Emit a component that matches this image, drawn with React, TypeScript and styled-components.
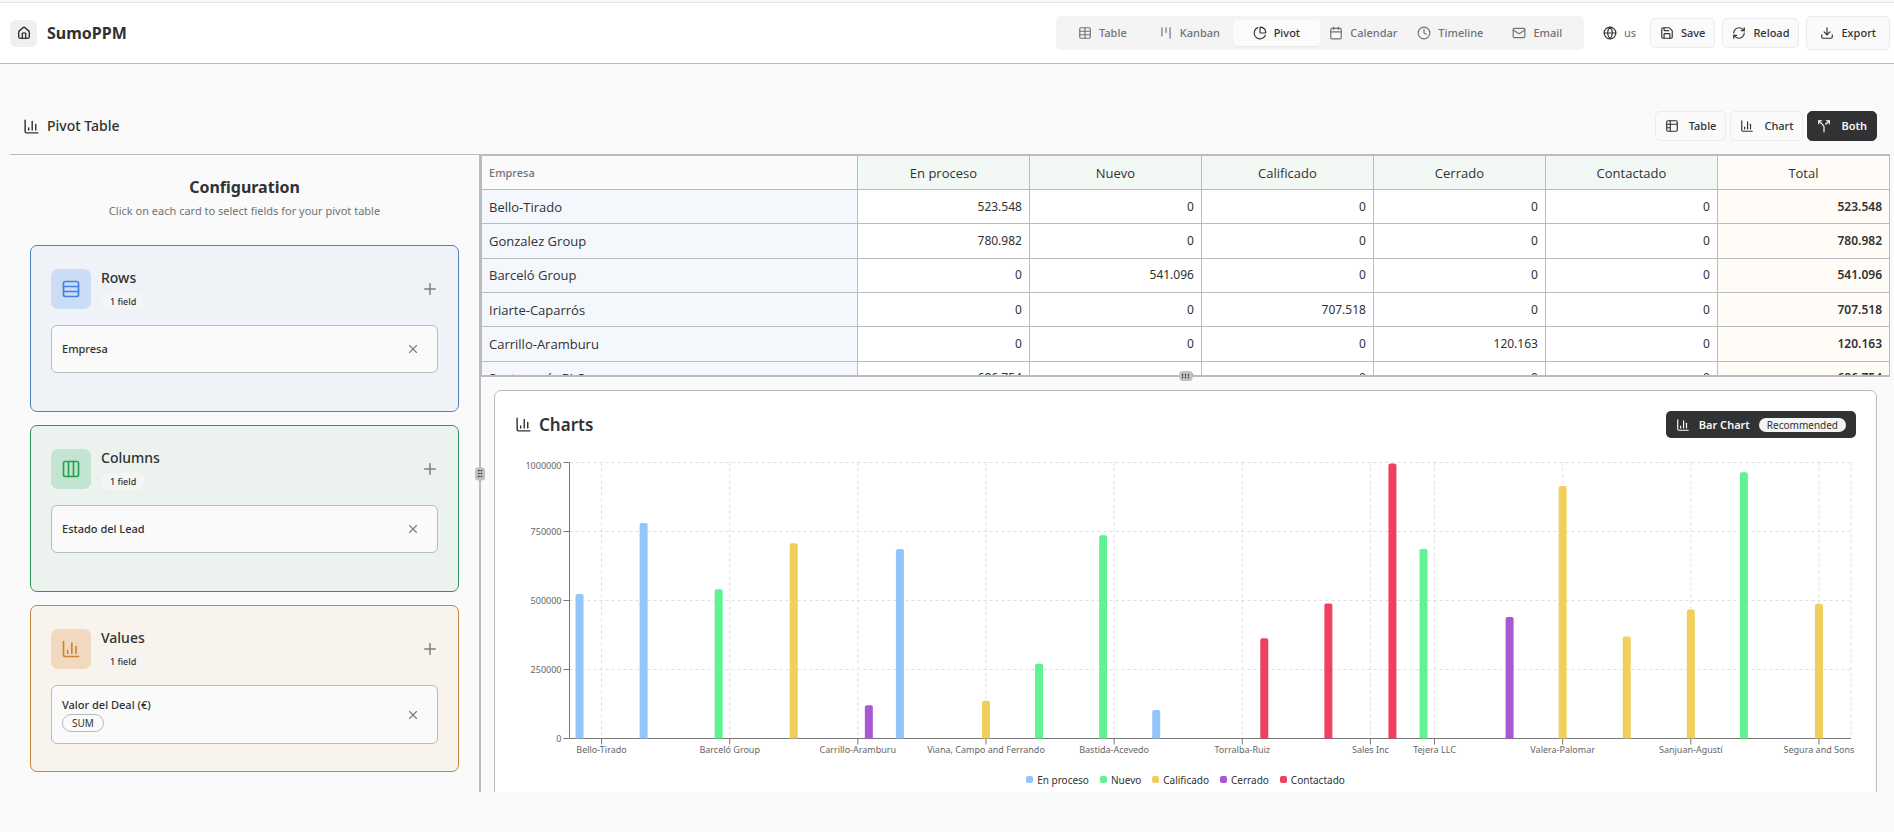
import React, { useLayoutEffect, useRef, useState } from "react";
import styled, { createGlobalStyle, css } from "styled-components";
import {
  Calendar,
  ChartColumn,
  ChartPie,
  Clock,
  Columns3,
  Download,
  Globe,
  GripVertical,
  House,
  Kanban,
  Mail,
  Plus,
  RefreshCw,
  Rows3,
  Save,
  Split,
  Table,
  X,
} from "lucide-react";

const line = "#b9bbbc";
const ink = "#303233";
const muted = "#707374";

const GlobalStyle = createGlobalStyle`
  *, *::before, *::after { box-sizing: border-box; }
  body {
    margin: 0;
    background: #fafafa;
    color: ${ink};
    font: 400 11px/16px "Noto Sans", "Open Sans", sans-serif;
  }
  button { font: inherit; color: inherit; margin: 0; cursor: pointer; }
  h1, h2, h3, p { margin: 0; }
  svg { flex-shrink: 0; }
`;

const Page = styled.div`
  display: flex;
  flex-direction: column;
  height: 100vh;
  min-height: 720px;
`;

/* ---------- header ---------- */

const Header = styled.header`
  display: flex;
  align-items: center;
  justify-content: space-between;
  margin-top: 2px;
  padding: 13px 4px 13px 10px;
  background: #fff;
  border-top: 1px solid #e4e4e4;
  border-bottom: 1px solid ${line};
`;

const Brand = styled.div`
  display: flex;
  align-items: center;
  gap: 10px;
`;

const HomeLink = styled.a`
  display: flex;
  align-items: center;
  justify-content: center;
  width: 27px;
  height: 27px;
  border-radius: 6px;
  background: #efefef;
  color: #111;
`;

const BrandName = styled.h1`
  font-size: 16px;
  line-height: 24px;
  font-weight: 700;
`;

const HeaderRight = styled.div`
  display: flex;
  align-items: center;
  gap: 7px;
`;

const TabBar = styled.nav`
  display: grid;
  grid-template-columns: repeat(6, 87px);
  padding: 4px 3px;
  border-radius: 5px;
  background: #f4f4f4;
`;

const Tab = styled.button<{ $active?: boolean }>`
  display: flex;
  align-items: center;
  justify-content: center;
  gap: 7px;
  height: 26px;
  padding: 0;
  border: 0;
  border-radius: 4px;
  background: transparent;
  color: ${muted};
  font-weight: 500;
  ${(p) =>
    p.$active &&
    css`
      background: #fbfbfb;
      color: ${ink};
      box-shadow: 0 1px 2px rgba(0, 0, 0, 0.06);
    `}
`;

const LanguageButton = styled.button`
  display: flex;
  align-items: center;
  gap: 7px;
  padding: 0 7px 0 12px;
  border: 0;
  background: transparent;
  span { color: #66696a; }
`;

const ActionButton = styled.button<{ $dark?: boolean; $large?: boolean; $wide?: boolean }>`
  display: flex;
  align-items: center;
  gap: ${(p) => (p.$wide ? 10 : 7)}px;
  height: ${(p) => (p.$large ? 34 : 30)}px;
  padding: 0 ${(p) => (p.$large ? 13 : 9)}px;
  border: 1px solid ${(p) => (p.$dark ? ink : "#ebebeb")};
  border-radius: 5px;
  background: ${(p) => (p.$dark ? ink : "#fafafa")};
  color: ${(p) => (p.$dark ? "#fafafa" : ink)};
  font-weight: ${(p) => (p.$dark ? 600 : 500)};
`;

/* ---------- pivot area ---------- */

const Main = styled.main`
  flex: 1;
  min-height: 0;
  display: flex;
  flex-direction: column;
  padding: 47px 4px 40px 10px;
`;

const Toolbar = styled.div`
  display: flex;
  align-items: center;
  justify-content: space-between;
  padding: 0 13px 13px;
  border-bottom: 1px solid ${line};
`;

const ToolbarTitle = styled.h2`
  display: flex;
  align-items: center;
  gap: 7px;
  font-size: 14px;
  line-height: 20px;
  font-weight: 500;
`;

const ViewButtons = styled.div`
  display: flex;
  gap: 4px;
`;

const Workspace = styled.div`
  flex: 1;
  min-height: 0;
  display: grid;
  grid-template-columns: calc(25% - 1px) 2px minmax(0, 1fr);
`;

const Results = styled.div`
  min-height: 0;
  display: grid;
  grid-template-rows: minmax(0, 9fr) 2px minmax(0, 17fr);
`;

const Divider = styled.div`
  position: relative;
  background: ${line};
`;

const Handle = styled.span<{ $flat?: boolean }>`
  position: absolute;
  z-index: 1;
  top: 50%;
  left: 50%;
  display: flex;
  align-items: center;
  justify-content: center;
  width: 10px;
  height: 13px;
  border-radius: 3px;
  background: #c0c0c0;
  transform: translate(-50%, -50%) ${(p) => (p.$flat ? "rotate(90deg)" : "")};
`;

/* ---------- configuration ---------- */

const ConfigPanel = styled.aside`
  min-height: 0;
  overflow: hidden;
  display: flex;
  flex-direction: column;
  padding: 20px;
`;

const ConfigHead = styled.div`
  margin-bottom: 25px;
  text-align: center;
`;

const ConfigTitle = styled.h2`
  font-size: 16px;
  line-height: 24px;
  font-weight: 700;
`;

const ConfigHint = styled.p`
  margin-top: 3px;
  line-height: 18px;
  color: ${muted};
`;

const Cards = styled.div`
  flex: 1;
  display: flex;
  flex-direction: column;
  gap: 13px;
`;

type Tone = "blue" | "green" | "orange";
const tones: Record<Tone, { edge: string; fill: string; box: string; icon: string; badge: string }> = {
  blue: { edge: "#4b80bd", fill: "#eff3f8", box: "#cbdcf5", icon: "#4280e4", badge: "#f4f5f7" },
  green: { edge: "#2f9558", fill: "#ecf3ee", box: "#c3e4d0", icon: "#26a052", badge: "#f4f5f4" },
  orange: { edge: "#c2853c", fill: "#f8f3ec", box: "#f0d9be", icon: "#d08230", badge: "#f4f4f5" },
};

const Card = styled.section<{ $tone: Tone }>`
  flex: 1;
  padding: 22px 20px 20px;
  border: 1px solid ${(p) => tones[p.$tone].edge};
  border-radius: 7px;
  background: ${(p) => tones[p.$tone].fill};
`;

const CardHead = styled.div`
  display: flex;
  align-items: center;
  gap: 10px;
  margin-bottom: 15px;
`;

const CardIcon = styled.span<{ $tone: Tone }>`
  display: flex;
  align-items: center;
  justify-content: center;
  width: 40px;
  height: 40px;
  border-radius: 7px;
  background: ${(p) => tones[p.$tone].box};
  color: ${(p) => tones[p.$tone].icon};
`;

const CardText = styled.div`
  flex: 1;
  display: flex;
  flex-direction: column;
  align-items: flex-start;
  gap: 5px;
`;

const CardTitle = styled.h3`
  font-size: 14px;
  line-height: 20px;
  font-weight: 500;
`;

const CountBadge = styled.span<{ $tone: Tone }>`
  padding: 0 9px;
  border-radius: 9px;
  background: ${(p) => tones[p.$tone].badge};
  font-size: 9px;
  line-height: 17px;
  font-weight: 500;
`;

const IconButton = styled.button`
  display: flex;
  align-items: center;
  justify-content: center;
  width: 16px;
  height: 20px;
  padding: 0;
  border: 0;
  background: transparent;
  color: #7c7e80;
`;

const Field = styled.div`
  display: flex;
  align-items: center;
  justify-content: space-between;
  min-height: 48px;
  padding: 11px 16px 11px 10px;
  border: 1px solid ${line};
  border-radius: 6px;
  background: #fafafa;
`;

const FieldText = styled.div`
  display: flex;
  flex-direction: column;
  align-items: flex-start;
  gap: 1px;
  font-weight: 500;
`;

const AggregatePill = styled.span`
  padding: 0 9px;
  border: 1px solid ${line};
  border-radius: 9px;
  font-size: 10px;
  line-height: 16px;
  font-weight: 400;
`;

/* ---------- pivot table ---------- */

const TablePane = styled.div`
  min-height: 0;
  overflow: hidden;
`;

const PivotTable = styled.table`
  width: 100%;
  height: 241px;
  table-layout: fixed;
  border-collapse: collapse;
  background: #fff;
  font-size: 12px;
  line-height: 20px;
  th, td {
    padding: 0 7px;
    border: 1px solid ${line};
  }
`;

const HeadRow = styled.tr`
  height: 34px;
`;

const CornerHead = styled.th`
  width: 26.7%;
  background: #fafafa;
  color: ${muted};
  font-size: 11px;
  font-weight: 500;
  text-align: left;
`;

const ColumnHead = styled.th<{ $total?: boolean }>`
  background: ${(p) => (p.$total ? "#fffbf7" : "#f2f8f4")};
  font-family: "Open Sans", sans-serif;
  font-size: 13px;
  font-weight: 500;
`;

const RowHead = styled.th`
  background: #f4f8fd;
  font-family: "Open Sans", sans-serif;
  font-size: 13px;
  font-weight: 500;
  text-align: left;
`;

const NumberCell = styled.td<{ $total?: boolean }>`
  text-align: right;
  ${(p) =>
    p.$total &&
    css`
      background: #fffbf7;
      font-weight: 600;
    `}
`;

/* ---------- chart ---------- */

const ChartPane = styled.div`
  min-height: 0;
  overflow: hidden;
  padding: 13px 13px 0;
`;

const ChartCard = styled.section`
  padding: 20px;
  border: 1px solid ${line};
  border-radius: 7px;
  background: #fff;
`;

const ChartHead = styled.div`
  display: flex;
  align-items: center;
  justify-content: space-between;
  margin-bottom: 18px;
`;

const ChartTitle = styled.h2`
  display: flex;
  align-items: center;
  gap: 7px;
  font-size: 17px;
  line-height: 28px;
  font-weight: 600;
`;

const ChartTypeButton = styled.button`
  display: flex;
  align-items: center;
  gap: 9px;
  height: 27px;
  padding: 0 10px;
  border: 0;
  border-radius: 5px;
  background: ${ink};
  color: #fafafa;
  font-weight: 600;
`;

const RecommendedBadge = styled.span`
  padding: 0 8px;
  border-radius: 7px;
  background: #f4f4f4;
  color: ${ink};
  font-size: 10px;
  line-height: 14px;
  font-weight: 400;
`;

const ChartFrame = styled.div`
  height: 305px;
`;

const ChartSvg = styled.svg`
  display: block;
  width: 100%;
  height: 100%;
  overflow: visible;
  font-size: 9px;
  fill: #666;
`;

const Legend = styled.ul`
  display: flex;
  justify-content: center;
  gap: 11px;
  margin: 0;
  padding: 10px 0 0;
  list-style: none;
  font-size: 10px;
`;

const LegendItem = styled.li`
  display: flex;
  align-items: center;
  gap: 4px;
`;

const Swatch = styled.span<{ $color: string }>`
  width: 7px;
  height: 7px;
  border-radius: 2px;
  background: ${(p) => p.$color};
`;

/* ---------- data ---------- */

const series = [
  { name: "En proceso", color: "#92c5fb" },
  { name: "Nuevo", color: "#60f392" },
  { name: "Calificado", color: "#f0cf5d" },
  { name: "Cerrado", color: "#a957d3" },
  { name: "Contactado", color: "#ee415e" },
];

const tableRows = [
  { name: "Bello-Tirado", column: 0, value: "523.548" },
  { name: "Gonzalez Group", column: 0, value: "780.982" },
  { name: "Barceló Group", column: 1, value: "541.096" },
  { name: "Iriarte-Caparrós", column: 2, value: "707.518" },
  { name: "Carrillo-Aramburu", column: 3, value: "120.163" },
  { name: "Santamaría PLC", column: 0, value: "686.754" },
];

const points: { label?: string; series: number; value: number }[] = [
  { label: "Bello-Tirado", series: 0, value: 523548 },
  { series: 0, value: 780982 },
  { label: "Barceló Group", series: 1, value: 541096 },
  { series: 2, value: 707518 },
  { label: "Carrillo-Aramburu", series: 3, value: 120163 },
  { series: 0, value: 686754 },
  { label: "Viana, Campo and Ferrando", series: 2, value: 136500 },
  { series: 1, value: 270500 },
  { label: "Bastida-Acevedo", series: 1, value: 736000 },
  { series: 0, value: 103000 },
  { label: "Torralba-Ruiz", series: 4, value: 363500 },
  { series: 4, value: 489500 },
  { label: "Sales Inc", series: 4, value: 996000 },
  { label: "Tejera LLC", series: 1, value: 686500 },
  { series: 3, value: 440500 },
  { label: "Valera-Palomar", series: 2, value: 914500 },
  { series: 2, value: 369500 },
  { label: "Sanjuan-Agustí", series: 2, value: 467500 },
  { series: 1, value: 964500 },
  { label: "Segura and Sons", series: 2, value: 488000 },
];

const tabs = [
  { label: "Table", Icon: Table },
  { label: "Kanban", Icon: Kanban },
  { label: "Pivot", Icon: ChartPie, active: true },
  { label: "Calendar", Icon: Calendar },
  { label: "Timeline", Icon: Clock },
  { label: "Email", Icon: Mail },
];

const cards: { title: string; tone: Tone; Icon: typeof Rows3; field: string; aggregate?: string }[] = [
  { title: "Rows", tone: "blue", Icon: Rows3, field: "Empresa" },
  { title: "Columns", tone: "green", Icon: Columns3, field: "Estado del Lead" },
  { title: "Values", tone: "orange", Icon: ChartColumn, field: "Valor del Deal (€)", aggregate: "SUM" },
];

/* ---------- components ---------- */

function TableIcon() {
  return (
    <svg width="14" height="14" viewBox="0 0 24 24" fill="none" stroke="currentColor" strokeWidth="2" strokeLinecap="round" strokeLinejoin="round">
      <rect x="3" y="3" width="18" height="18" rx="2" />
      <path d="M3 9h18M9 3v18M3 15h6" />
    </svg>
  );
}

const barPath = (x: number, y: number, w: number, base: number) =>
  `M${x},${base}V${y + 2}q0,-2 2,-2h${w - 4}q2,0 2,2V${base}Z`;

function BarChart() {
  const frame = useRef<HTMLDivElement>(null);
  const [width, setWidth] = useState(1340);

  useLayoutEffect(() => {
    const el = frame.current;
    if (!el) return;
    const update = () => setWidth(el.clientWidth);
    update();
    const observer = new ResizeObserver(update);
    observer.observe(el);
    return () => observer.disconnect();
  }, []);

  const left = 54.5;
  const right = width - 5;
  const top = 5.5;
  const base = 281.5;
  const band = (right - left) / points.length;
  const y = (v: number) => base - (v / 1000000) * (base - top);
  const centre = (i: number) => left + band * (i + 0.5);
  const labelled = points.map((p, i) => ({ ...p, i })).filter((p) => p.label);
  const ticks = [0, 250000, 500000, 750000, 1000000];

  return (
    <ChartFrame ref={frame}>
      <ChartSvg role="img" aria-label="Valor del Deal by Empresa and Estado del Lead">
        <g stroke="#dfdfdf" strokeDasharray="3 3">
          {ticks.map((t) => (
            <line key={t} x1={left} x2={right} y1={y(t)} y2={y(t)} />
          ))}
          {labelled.map((p) => (
            <line key={p.i} x1={centre(p.i)} x2={centre(p.i)} y1={top} y2={base} />
          ))}
          <line x1={right} x2={right} y1={top} y2={base} />
        </g>
        <g stroke="#777">
          <line x1={left} x2={left} y1={top} y2={base} />
          <line x1={left} x2={right} y1={base} y2={base} />
          {ticks.map((t) => (
            <line key={t} x1={left - 6} x2={left} y1={y(t)} y2={y(t)} />
          ))}
          {labelled.map((p) => (
            <line key={p.i} x1={centre(p.i)} x2={centre(p.i)} y1={base} y2={base + 6} />
          ))}
        </g>
        {points.map((p, i) => (
          <path key={i} fill={series[p.series].color} d={barPath(centre(i) + (p.series - 2) * 11 - 4, y(p.value), 8, base)} />
        ))}
        {ticks.map((t) => (
          <text key={t} x={left - 8} y={Math.max(y(t), 9) + 3} textAnchor="end">
            {t}
          </text>
        ))}
        {labelled.map((p) => (
          <text key={p.i} x={centre(p.i)} y={base + 14} textAnchor="middle">
            {p.label}
          </text>
        ))}
      </ChartSvg>
    </ChartFrame>
  );
}

export default function App() {
  return (
    <Page>
      <GlobalStyle />
      <Header>
        <Brand>
          <HomeLink href="#home" aria-label="Home">
            <House size={14} />
          </HomeLink>
          <BrandName>SumoPPM</BrandName>
        </Brand>
        <HeaderRight>
          <TabBar>
            {tabs.map(({ label, Icon, active }) => (
              <Tab key={label} $active={active}>
                <Icon size={14} />
                {label}
              </Tab>
            ))}
          </TabBar>
          <LanguageButton>
            <Globe size={14} />
            <span>us</span>
          </LanguageButton>
          <ActionButton>
            <Save size={14} />
            Save
          </ActionButton>
          <ActionButton>
            <RefreshCw size={14} />
            Reload
          </ActionButton>
          <ActionButton $large>
            <Download size={14} />
            Export
          </ActionButton>
        </HeaderRight>
      </Header>

      <Main>
        <Toolbar>
          <ToolbarTitle>
            <ChartColumn size={17} />
            Pivot Table
          </ToolbarTitle>
          <ViewButtons>
            <ActionButton $wide>
              <TableIcon />
              Table
            </ActionButton>
            <ActionButton $wide>
              <ChartColumn size={14} />
              Chart
            </ActionButton>
            <ActionButton $wide $dark>
              <Split size={14} />
              Both
            </ActionButton>
          </ViewButtons>
        </Toolbar>

        <Workspace>
          <ConfigPanel>
            <ConfigHead>
              <ConfigTitle>Configuration</ConfigTitle>
              <ConfigHint>Click on each card to select fields for your pivot table</ConfigHint>
            </ConfigHead>
            <Cards>
              {cards.map(({ title, tone, Icon, field, aggregate }) => (
                <Card key={title} $tone={tone}>
                  <CardHead>
                    <CardIcon $tone={tone}>
                      <Icon size={20} />
                    </CardIcon>
                    <CardText>
                      <CardTitle>{title}</CardTitle>
                      <CountBadge $tone={tone}>1 field</CountBadge>
                    </CardText>
                    <IconButton aria-label={`Add field to ${title}`}>
                      <Plus size={18} />
                    </IconButton>
                  </CardHead>
                  <Field>
                    <FieldText>
                      {field}
                      {aggregate && <AggregatePill>{aggregate}</AggregatePill>}
                    </FieldText>
                    <IconButton aria-label={`Remove ${field}`}>
                      <X size={14} />
                    </IconButton>
                  </Field>
                </Card>
              ))}
            </Cards>
          </ConfigPanel>

          <Divider>
            <Handle>
              <GripVertical size={10} />
            </Handle>
          </Divider>

          <Results>
            <TablePane>
              <PivotTable>
                <thead>
                  <HeadRow>
                    <CornerHead scope="col">Empresa</CornerHead>
                    {series.map((s) => (
                      <ColumnHead key={s.name} scope="col">
                        {s.name}
                      </ColumnHead>
                    ))}
                    <ColumnHead scope="col" $total>
                      Total
                    </ColumnHead>
                  </HeadRow>
                </thead>
                <tbody>
                  {tableRows.map((r) => (
                    <tr key={r.name}>
                      <RowHead scope="row">{r.name}</RowHead>
                      {series.map((s, i) => (
                        <NumberCell key={s.name}>{i === r.column ? r.value : "0"}</NumberCell>
                      ))}
                      <NumberCell $total>{r.value}</NumberCell>
                    </tr>
                  ))}
                </tbody>
              </PivotTable>
            </TablePane>

            <Divider>
              <Handle $flat>
                <GripVertical size={10} />
              </Handle>
            </Divider>

            <ChartPane>
              <ChartCard>
                <ChartHead>
                  <ChartTitle>
                    <ChartColumn size={17} />
                    Charts
                  </ChartTitle>
                  <ChartTypeButton>
                    <ChartColumn size={14} />
                    Bar Chart
                    <RecommendedBadge>Recommended</RecommendedBadge>
                  </ChartTypeButton>
                </ChartHead>
                <BarChart />
                <Legend>
                  {series.map((s) => (
                    <LegendItem key={s.name}>
                      <Swatch $color={s.color} />
                      {s.name}
                    </LegendItem>
                  ))}
                </Legend>
              </ChartCard>
            </ChartPane>
          </Results>
        </Workspace>
      </Main>
    </Page>
  );
}
